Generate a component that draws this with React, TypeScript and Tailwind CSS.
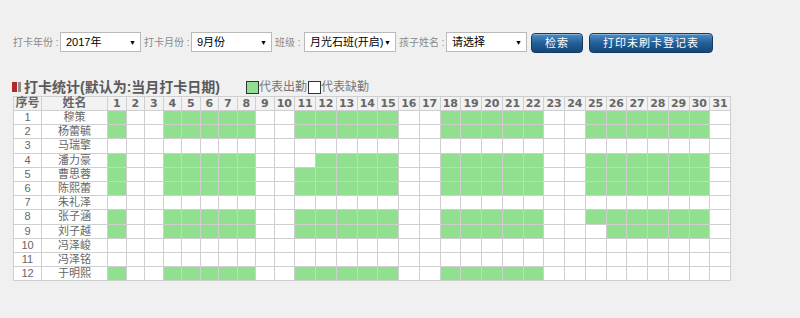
import React from 'react';

const FONT = "font-['Liberation_Sans','Noto_Sans_CJK_SC',sans-serif]";

const days = Array.from({ length: 31 }, (_, i) => i + 1);
const workdays = [1, 4, 5, 6, 7, 8, 11, 12, 13, 14, 15, 18, 19, 20, 21, 22, 25, 26, 27, 28, 29, 30];

const students = [
  { name: '穆策', present: workdays },
  { name: '杨蕾毓', present: workdays },
  { name: '马瑞擎', present: [] as number[] },
  { name: '潘力豪', present: workdays.filter(d => d !== 11) },
  { name: '曹思蓉', present: workdays },
  { name: '陈熙蕾', present: workdays },
  { name: '朱礼泽', present: [] as number[] },
  { name: '张子涵', present: workdays },
  { name: '刘子越', present: workdays.filter(d => d !== 25) },
  { name: '冯泽峻', present: [] as number[] },
  { name: '冯泽铭', present: [] as number[] },
  { name: '于明熙', present: workdays.filter(d => d < 25) },
];

const FakeSelect = ({ value, width }: { value: string; width: string }) => (
  <div className={`relative flex-none h-[20px] ${width} bg-white border border-[#b9b9b9] flex items-center pl-[5px] text-[11px] text-black whitespace-nowrap`}>
    {value}
    <span className="absolute right-[4px] top-[6px] text-[7px] leading-none text-black">▼</span>
  </div>
);

const Label = ({ text, width }: { text: string; width: string }) => (
  <span className={`flex-none ${width} whitespace-nowrap text-[10px] text-[#8a8a8a]`}>{text}</span>
);

const BlueButton = ({ label, width }: { label: string; width: string }) => (
  <button
    className={`flex-none h-[20px] ${width} rounded-[4px] border border-[#143b63] bg-linear-to-b from-[#4f8dc6] via-[#22609a] to-[#164676] text-white text-[11px] tracking-[1px] shadow-[inset_0_1px_0_rgba(255,255,255,0.35)]`}
  >
    {label}
  </button>
);

export default function App() {
  return (
    <div className={`min-h-[318px] bg-[#f0f0f0] ${FONT}`}>
      {/* search bar */}
      <div className="flex items-center pt-[32px] pl-[13px] h-[52px]">
        <Label text="打卡年份 :" width="w-[47px]" />
        <FakeSelect value="2017年" width="w-[81px]" />
        <Label text="打卡月份 :" width="ml-[3px] w-[47px]" />
        <FakeSelect value="9月份" width="w-[81px]" />
        <Label text="班级 :" width="ml-[3px] w-[29px]" />
        <FakeSelect value="月光石班(开启)" width="w-[92px]" />
        <Label text="孩子姓名 :" width="ml-[3px] w-[47px]" />
        <FakeSelect value="请选择" width="w-[81px]" />
        <div className="ml-[4px]">
          <BlueButton label="检索" width="w-[52px]" />
        </div>
        <div className="ml-[6px]">
          <BlueButton label="打印未刷卡登记表" width="w-[124px]" />
        </div>
      </div>

      {/* title + legend */}
      <div className="flex items-center mt-[27px] pl-[12px] h-[16px]">
        <span className="w-[5px] h-[10px] bg-[#b3262a]" />
        <span className="ml-[1px] w-[3px] h-[10px] bg-[#8c8c8c]" />
        <span className="ml-[3px] text-[14px] font-bold text-[#5a5a5a]">打卡统计(默认为:当月打卡日期)</span>
        <span className="ml-[26px] w-[13px] h-[13px] bg-[#90e090] border border-[#333]" />
        <span className="text-[12px] text-[#777]">代表出勤</span>
        <span className="ml-[1px] w-[13px] h-[13px] bg-white border border-[#333]" />
        <span className="text-[12px] text-[#777]">代表缺勤</span>
      </div>

      {/* attendance table */}
      <div className="pl-[13px] mt-[1px]">
        <table className="table-fixed w-[717px] border-collapse bg-white">
          <colgroup>
            <col className="w-[28px]" />
            <col className="w-[66px]" />
            {days.map(d => (
              <col key={d} className={d < 10 ? 'w-[18.5px]' : 'w-[20.75px]'} />
            ))}
          </colgroup>
          <thead>
            <tr className="h-[14px] bg-[#f2f2f2]">
              <th className="p-0 border border-[#cfcfcf] text-[12px] font-bold text-[#666] leading-[13px]">序号</th>
              <th className="p-0 border border-[#cfcfcf] text-[12px] font-bold text-[#666] leading-[13px]">姓名</th>
              {days.map(d => (
                <th key={d} className="p-0 border border-[#cfcfcf] text-[11px] font-bold text-[#666] leading-[13px] font-['DejaVu_Sans',sans-serif]">
                  {d}
                </th>
              ))}
            </tr>
          </thead>
          <tbody>
            {students.map((s, i) => (
              <tr key={s.name} className="h-[14.2px]">
                <td className="p-0 border border-[#cfcfcf] text-center text-[11px] text-[#666] leading-[13px]">{i + 1}</td>
                <td className="p-0 border border-[#cfcfcf] text-center text-[11px] text-[#666] leading-[13px]">{s.name}</td>
                {days.map(d => (
                  <td
                    key={d}
                    className={`p-0 border border-[#cfcfcf] ${s.present.includes(d) ? 'bg-[#90e090]' : 'bg-white'}`}
                  />
                ))}
              </tr>
            ))}
          </tbody>
        </table>
      </div>
    </div>
  );
}
